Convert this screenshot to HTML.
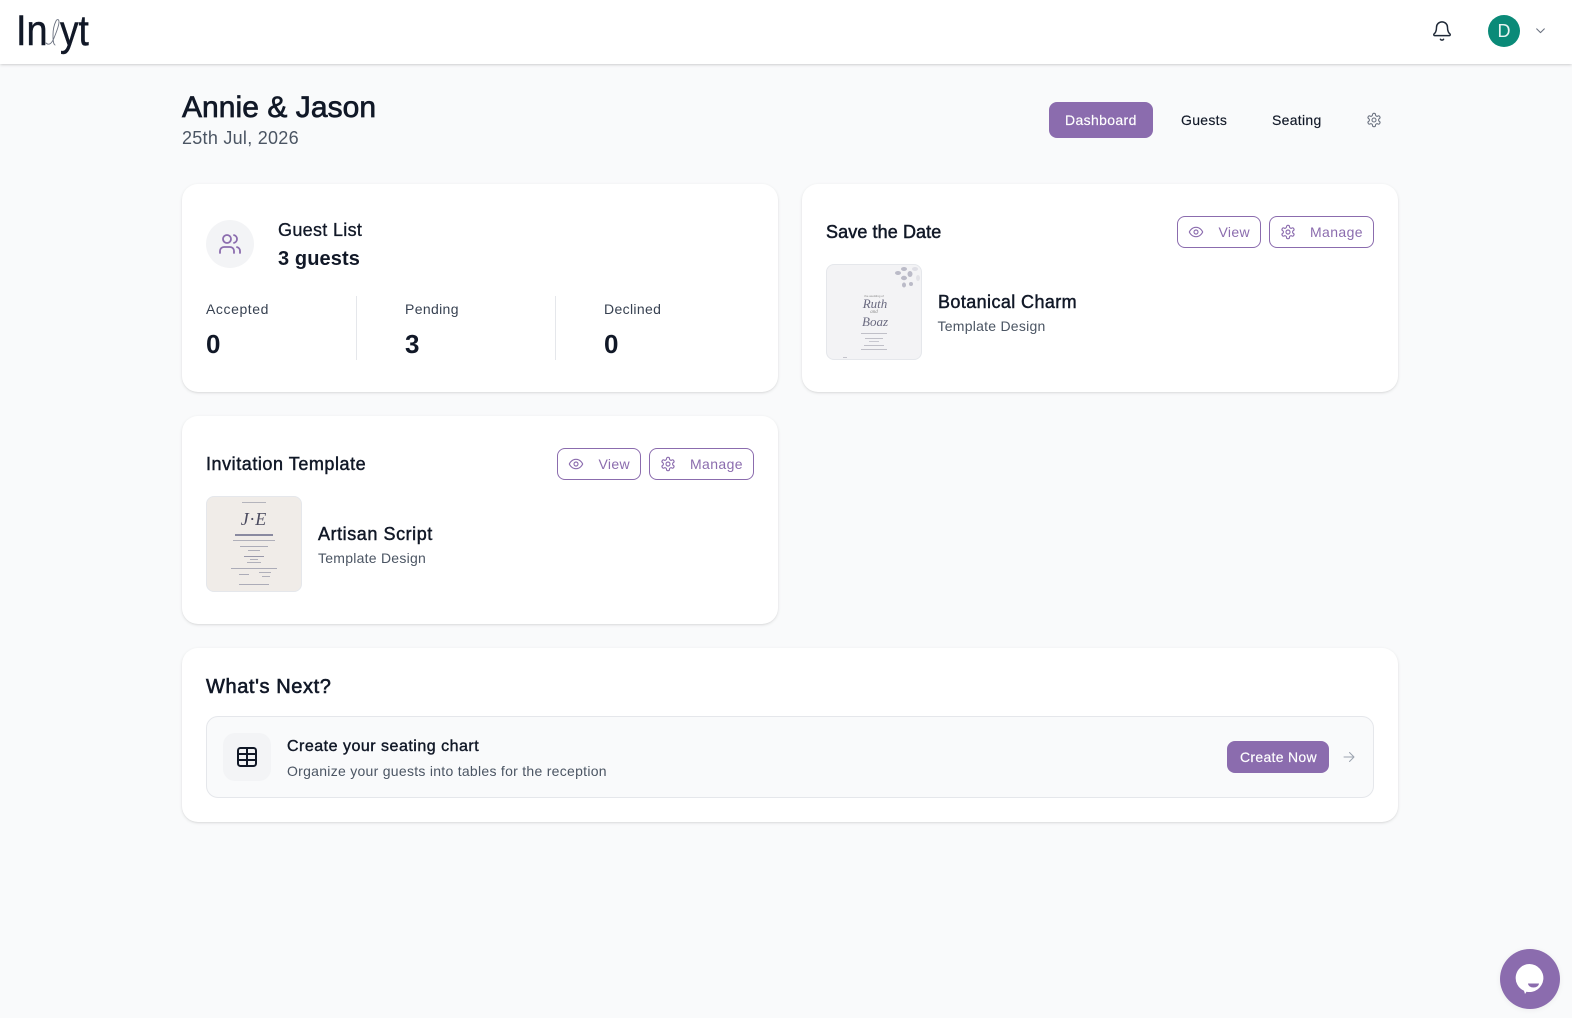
<!DOCTYPE html>
<html lang="en">
<head>
<meta charset="utf-8">
<title>Annie &amp; Jason</title>
<style>
html,body{margin:0;padding:0;width:1572px;height:1018px;overflow:hidden;background:#f9fafb}
body{font-family:"Liberation Sans",sans-serif;color:#111827;position:relative}
.a{position:absolute}
.t{position:absolute;white-space:nowrap;margin:0;font-weight:400}
.m{-webkit-text-stroke:.3px currentColor}
.card{position:absolute;background:#fff;border-radius:16px;box-shadow:0 1px 3px rgba(0,0,0,.1),0 1px 2px -1px rgba(0,0,0,.1)}
.btn{position:absolute;box-sizing:border-box;height:32px;border:1px solid #8b6cae;border-radius:8px;background:#fff}
.g{color:#4b5563}
.p{color:#8b6cae}
.b{position:absolute;inset:0;filter:blur(.35px)}
svg{position:absolute;display:block;fill:none;stroke:currentColor;stroke-linecap:round;stroke-linejoin:round}
</style>
</head>
<body>
<svg width="0" height="0" style="position:absolute">
<defs>
<g id="gear"><path d="M12.22 2h-.44a2 2 0 0 0-2 2v.18a2 2 0 0 1-1 1.73l-.43.25a2 2 0 0 1-2 0l-.15-.08a2 2 0 0 0-2.73.73l-.22.38a2 2 0 0 0 .73 2.73l.15.1a2 2 0 0 1 1 1.72v.51a2 2 0 0 1-1 1.74l-.15.09a2 2 0 0 0-.73 2.73l.22.38a2 2 0 0 0 2.73.73l.15-.08a2 2 0 0 1 2 0l.43.25a2 2 0 0 1 1 1.73V20a2 2 0 0 0 2 2h.44a2 2 0 0 0 2-2v-.18a2 2 0 0 1 1-1.73l.43-.25a2 2 0 0 1 2 0l.15.08a2 2 0 0 0 2.73-.73l.22-.39a2 2 0 0 0-.73-2.73l-.15-.08a2 2 0 0 1-1-1.74v-.5a2 2 0 0 1 1-1.74l.15-.09a2 2 0 0 0 .73-2.73l-.22-.38a2 2 0 0 0-2.73-.73l-.15.08a2 2 0 0 1-2 0l-.43-.25a2 2 0 0 1-1-1.73V4a2 2 0 0 0-2-2z"/><circle cx="12" cy="12" r="3"/></g>
<g id="eye"><path d="M2 12s3-7 10-7 10 7 10 7-3 7-10 7-10-7-10-7Z"/><circle cx="12" cy="12" r="3"/></g>
</defs>
</svg>

<!-- Header -->
<div class="a" style="left:0;top:0;width:1572px;height:64px;background:#fff;box-shadow:0 1px 3px rgba(0,0,0,.14),0 1px 2px -1px rgba(0,0,0,.1)"></div>
<div class="t" style="left:16px;top:7px;font-size:43px;line-height:48px;color:#111827;-webkit-text-stroke:.5px #111827;transform-origin:0 0;transform:scaleX(.88)">In</div>
<svg style="left:42px;top:16px;color:#6b7280" width="22" height="32" viewBox="0 0 22 32" stroke-width=".9"><path d="M4 27c3 3 6 0 8-5 2-5 5-12 5-16 0-3-2-3-3-1-2 4-3 10-3 14 0 4 0 9 2 10"/></svg>
<div class="t" style="left:60px;top:7px;font-size:43px;line-height:48px;color:#111827;-webkit-text-stroke:.5px #111827;transform-origin:0 0;transform:scaleX(.86)">yt</div>

<svg style="left:1431px;top:20px;color:#1f2937" width="22" height="22" viewBox="0 0 24 24" stroke-width="1.6"><path d="M10.268 21a2 2 0 0 0 3.464 0"/><path d="M3.262 15.326A1 1 0 0 0 4 17h16a1 1 0 0 0 .74-1.673C19.41 13.956 18 12.499 18 8A6 6 0 0 0 6 8c0 4.499-1.411 5.956-2.738 7.326"/></svg>
<div class="a" style="left:1488px;top:15px;width:32px;height:32px;border-radius:50%;background:#0a8a78"></div>
<div class="t" style="left:1488px;top:15px;width:32px;text-align:center;font-size:18px;line-height:32px;color:#e8f5f2">D</div>
<svg style="left:1534px;top:24px;color:#6b7280" width="13" height="13" viewBox="0 0 24 24" stroke-width="2"><path d="m5 9 7 7 7-7"/></svg>

<!-- Title -->
<h1 class="t" style="left:182px;top:90px;font-size:30px;line-height:36px;letter-spacing:.05px;-webkit-text-stroke:.7px #111827;color:#111827">Annie &amp; Jason</h1>
<div class="t g" style="left:182px;top:126px;font-size:18px;line-height:24px;letter-spacing:.27px">25th Jul, 2026</div>

<!-- Nav -->
<div class="a" style="left:1049px;top:102px;width:104px;height:36px;border-radius:8px;background:#8b6cae"></div>
<div class="t" style="left:1065px;top:110px;font-size:14px;line-height:20px;letter-spacing:.36px;-webkit-text-stroke:.15px #fff;color:#fff">Dashboard</div>
<div class="t" style="left:1181px;top:110px;font-size:14px;line-height:20px;letter-spacing:.3px;-webkit-text-stroke:.15px #111827;color:#111827">Guests</div>
<div class="t" style="left:1272px;top:110px;font-size:14px;line-height:20px;letter-spacing:.3px;-webkit-text-stroke:.15px #111827;color:#111827">Seating</div>
<svg style="left:1366px;top:112px;color:#6b7280" width="16" height="16" viewBox="0 0 24 24" stroke-width="1.6"><use href="#gear"/></svg>

<!-- Guest list card -->
<div class="card" style="left:182px;top:184px;width:596px;height:208px"></div>
<div class="a" style="left:206px;top:220px;width:48px;height:48px;border-radius:50%;background:#f3f4f6"></div>
<svg style="left:218px;top:232px;color:#8b6cae" width="24" height="24" viewBox="0 0 24 24" stroke-width="1.8"><path d="M16 21v-2a4 4 0 0 0-4-4H6a4 4 0 0 0-4 4v2"/><circle cx="9" cy="7" r="4"/><path d="M22 21v-2a4 4 0 0 0-3-3.87"/><path d="M16 3.13a4 4 0 0 1 0 7.75"/></svg>
<div class="t" style="left:278px;top:218px;font-size:18px;line-height:24px;letter-spacing:.32px;-webkit-text-stroke:.3px #111827">Guest List</div>
<div class="t" style="left:278px;top:245px;font-size:20px;line-height:28px;font-weight:700;letter-spacing:.1px;color:#111827">3 guests</div>

<div class="t" style="left:206px;top:299px;font-size:14px;line-height:20px;letter-spacing:.58px;color:#374151">Accepted</div>
<div class="t" style="left:206px;top:328px;font-size:26px;line-height:32px;font-weight:700">0</div>
<div class="a" style="left:356px;top:296px;width:1px;height:64px;background:#e5e7eb"></div>
<div class="t" style="left:405px;top:299px;font-size:14px;line-height:20px;letter-spacing:.35px;color:#374151">Pending</div>
<div class="t" style="left:405px;top:328px;font-size:26px;line-height:32px;font-weight:700">3</div>
<div class="a" style="left:555px;top:296px;width:1px;height:64px;background:#e5e7eb"></div>
<div class="t" style="left:604px;top:299px;font-size:14px;line-height:20px;letter-spacing:.35px;color:#374151">Declined</div>
<div class="t" style="left:604px;top:328px;font-size:26px;line-height:32px;font-weight:700">0</div>

<!-- Save the date card -->
<div class="card" style="left:802px;top:184px;width:596px;height:208px"></div>
<div class="t" style="left:826px;top:220px;font-size:18px;line-height:24px;letter-spacing:.1px;-webkit-text-stroke:.5px #111827">Save the Date</div>
<div class="btn" style="left:1177px;top:216px;width:84px"></div>
<svg style="left:1188px;top:224px;color:#8b6cae" width="16" height="16" viewBox="0 0 24 24" stroke-width="1.7"><use href="#eye"/></svg>
<div class="t p" style="left:1218.500px;top:222px;font-size:14px;line-height:20px;letter-spacing:.35px">View</div>
<div class="btn" style="left:1269px;top:216px;width:105px"></div>
<svg style="left:1280px;top:224px;color:#8b6cae" width="16" height="16" viewBox="0 0 24 24" stroke-width="1.7"><use href="#gear"/></svg>
<div class="t p" style="left:1310px;top:222px;font-size:14px;line-height:20px;letter-spacing:.4px">Manage</div>

<div class="a" style="left:826px;top:264px;width:96px;height:96px;box-sizing:border-box;border:1px solid #e5e7eb;border-radius:8px;background:#f3f3f5;overflow:hidden">
 <div class="b">
  <svg style="left:64px;top:-1px;stroke:none" width="32" height="32" viewBox="0 0 32 32"><g fill="#a8a8b8" opacity=".75"><ellipse cx="7" cy="9" rx="3" ry="2"/><ellipse cx="13" cy="5" rx="3" ry="2"/><ellipse cx="13" cy="14" rx="3" ry="2.200"/><ellipse cx="19" cy="10" rx="2.500" ry="3"/><ellipse cx="13" cy="21" rx="2" ry="2.500"/><ellipse cx="20" cy="20" rx="2" ry="2"/><ellipse cx="24" cy="5" rx="3" ry="2" fill="#d9d9e0"/><ellipse cx="27" cy="14" rx="2" ry="3" fill="#dcdce2"/></g></svg>
  <div class="t" style="left:0;width:94px;text-align:center;top:29px;font-size:3px;line-height:4px;color:#888">the wedding of</div>
  <div class="t" style="left:1px;width:94px;text-align:center;top:32px;font:italic 13px/14px 'Liberation Serif',serif;color:#6a6a80">Ruth</div>
  <div class="t" style="left:0;width:94px;text-align:center;top:44px;font:italic 5px/7px 'Liberation Serif',serif;color:#888">and</div>
  <div class="t" style="left:1px;width:94px;text-align:center;top:50px;font:italic 13px/14px 'Liberation Serif',serif;color:#6a6a80">Boaz</div>
  <div class="a" style="left:34px;top:68px;width:26px;height:1px;background:#c0c0c8"></div>
  <div class="a" style="left:38px;top:73px;width:18px;height:1px;background:#c0c0c8"></div>
  <div class="a" style="left:42px;top:76px;width:10px;height:1px;background:#c8c8d0"></div>
  <div class="a" style="left:37px;top:80px;width:20px;height:1px;background:#c0c0c8"></div>
  <div class="a" style="left:34px;top:84px;width:26px;height:1px;background:#c0c0c8"></div>
  <div class="a" style="left:16px;top:92px;width:4px;height:1px;background:#c4c4cc"></div>
 </div>
</div>
<div class="t" style="left:938px;top:290px;font-size:18px;line-height:24px;letter-spacing:.4px;-webkit-text-stroke:.45px #111827">Botanical Charm</div>
<div class="t g" style="left:937.500px;top:316px;font-size:14px;line-height:20px;letter-spacing:.25px">Template Design</div>

<!-- Invitation card -->
<div class="card" style="left:182px;top:416px;width:596px;height:208px"></div>
<div class="t" style="left:206px;top:452px;font-size:18px;line-height:24px;letter-spacing:.55px;-webkit-text-stroke:.45px #111827">Invitation Template</div>
<div class="btn" style="left:557px;top:448px;width:84px"></div>
<svg style="left:568px;top:456px;color:#8b6cae" width="16" height="16" viewBox="0 0 24 24" stroke-width="1.7"><use href="#eye"/></svg>
<div class="t p" style="left:598.500px;top:454px;font-size:14px;line-height:20px;letter-spacing:.35px">View</div>
<div class="btn" style="left:649px;top:448px;width:105px"></div>
<svg style="left:660px;top:456px;color:#8b6cae" width="16" height="16" viewBox="0 0 24 24" stroke-width="1.7"><use href="#gear"/></svg>
<div class="t p" style="left:690px;top:454px;font-size:14px;line-height:20px;letter-spacing:.4px">Manage</div>

<div class="a" style="left:206px;top:496px;width:96px;height:96px;box-sizing:border-box;border:1px solid #e5e7eb;border-radius:8px;background:#f0ece8;overflow:hidden">
 <div class="b">
  <div class="a" style="left:35px;top:5px;width:24px;height:1px;background:#b4b4bc"></div>
  <div class="t" style="left:0;width:94px;text-align:center;top:12px;font:italic 18px/20px 'Liberation Serif',serif;letter-spacing:1px;color:#4b4b5f">J&#183;E</div>
  <div class="a" style="left:28px;top:37px;width:38px;height:2px;background:#8a8aa0"></div>
  <div class="a" style="left:26px;top:43px;width:42px;height:1px;background:#b0b0ba"></div>
  <div class="a" style="left:33px;top:49px;width:28px;height:1px;background:#acacb8"></div>
  <div class="a" style="left:41px;top:53px;width:12px;height:1px;background:#b0b0ba"></div>
  <div class="a" style="left:37px;top:59px;width:20px;height:1px;background:#9898aa"></div>
  <div class="a" style="left:43px;top:62px;width:8px;height:1px;background:#b0b0ba"></div>
  <div class="a" style="left:40px;top:65px;width:14px;height:1px;background:#b0b0ba"></div>
  <div class="a" style="left:24px;top:71px;width:46px;height:1px;background:#acacb8"></div>
  <div class="a" style="left:32px;top:77px;width:10px;height:1px;background:#acacb8"></div>
  <div class="a" style="left:52px;top:75px;width:12px;height:1px;background:#b0b0ba"></div>
  <div class="a" style="left:55px;top:79px;width:8px;height:1px;background:#b0b0ba"></div>
  <div class="a" style="left:32px;top:87px;width:30px;height:1px;background:#acacb8"></div>
 </div>
</div>
<div class="t" style="left:318px;top:522px;font-size:18px;line-height:24px;letter-spacing:.56px;-webkit-text-stroke:.45px #111827">Artisan Script</div>
<div class="t g" style="left:318px;top:548px;font-size:14px;line-height:20px;letter-spacing:.25px">Template Design</div>

<!-- What's next -->
<div class="card" style="left:182px;top:648px;width:1216px;height:174px"></div>
<div class="t" style="left:206px;top:675px;font-size:20px;line-height:24px;letter-spacing:.6px;-webkit-text-stroke:.6px #111827">What's Next?</div>
<div class="a" style="left:206px;top:716px;width:1168px;height:82px;box-sizing:border-box;border:1px solid #e5e7eb;border-radius:12px;background:#f9fafb"></div>
<div class="a" style="left:223px;top:733px;width:48px;height:48px;border-radius:12px;background:#f3f4f6"></div>
<svg style="left:237px;top:747px;color:#111827" width="20" height="20" viewBox="0 0 20 20" stroke-width="2"><rect x="1" y="1" width="18" height="18" rx="2.500"/><path d="M10 1v18M1 7h18M1 13h18"/></svg>
<div class="t" style="left:287px;top:735px;font-size:16px;line-height:24px;letter-spacing:.5px;-webkit-text-stroke:.4px #111827">Create your seating chart</div>
<div class="t g" style="left:287px;top:761px;font-size:14px;line-height:20px;letter-spacing:.28px">Organize your guests into tables for the reception</div>
<div class="a" style="left:1227px;top:741px;width:102px;height:32px;border-radius:8px;background:#8b6cae"></div>
<div class="t" style="left:1240px;top:747px;font-size:14px;line-height:20px;letter-spacing:.3px;-webkit-text-stroke:.15px #fff;color:#fff">Create Now</div>
<svg style="left:1343px;top:751px;color:#9ca3af" width="12" height="12" viewBox="0 0 24 24" stroke-width="2"><path d="M2 12h20M13 3l9 9-9 9"/></svg>

<!-- Chat -->
<div class="a" style="left:1500px;top:949px;width:60px;height:60px;border-radius:50%;background:#8b6cae;box-shadow:0 1px 6px rgba(0,0,0,.06)"></div>
<svg style="left:1510px;top:959px;stroke:none" width="40" height="40" viewBox="0 0 40 40"><path d="M19.500 5a14 14 0 1 1-3 27.700L15 35l-1-3.200A14 14 0 0 1 19.500 5Z" fill="#fff"/><path d="M18 24.500h11a5.500 4 0 0 1-11 0Z" fill="#8b6cae"/></svg>
</body>
</html>
